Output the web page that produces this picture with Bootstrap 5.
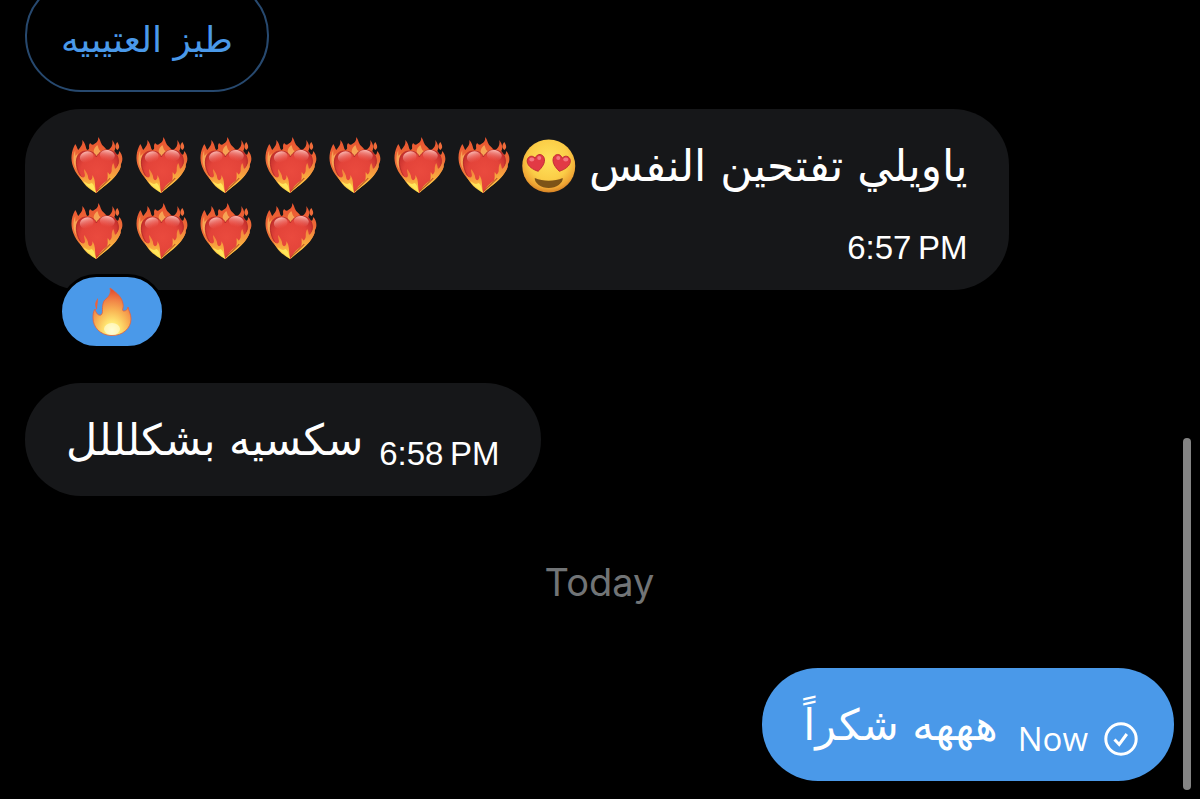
<!DOCTYPE html>
<html lang="ar" dir="ltr" data-bs-theme="dark">
<head>
<meta charset="utf-8">
<meta name="viewport" content="width=device-width, initial-scale=1">
<title>Messages</title>
<link href="https://cdn.jsdelivr.net/npm/bootstrap@5.3.0/dist/css/bootstrap.min.css" rel="stylesheet">
<style>
  body { background: #000; color: #fff; }
  .chat { padding: 0 26px 18px 25px; }
  .bubble { background: #161719; border-radius: 56px; padding: 24px 41px 23px; }
  .bubble-sent { background: #4a99e9; padding-right: 36px; }
  .bubble-outline { background: #000; border: 2px solid #27496f; color: #4a99e9; padding: 26px 34px 17px; margin-bottom: 17px; }
  .bubble-wide { padding-left: 40px; margin-bottom: 93px; }
  .msg { font-family: "DejaVu Sans", sans-serif; font-size: 43px; line-height: 66px; white-space: nowrap; }
  .msg-small { font-size: 36px; }
  .msg-wide { font-size: 44px; }
  .stamp { font-family: "Liberation Sans", sans-serif; font-size: 33px; line-height: 38px; white-space: nowrap; }
  .stamp-now { font-family: "Open Sans", "Noto Sans", sans-serif; }
  .day { font-family: Inter, sans-serif; font-size: 38px; line-height: 172px; color: #717476; }
  .emoji-grid { display: grid; grid-template-columns: repeat(8, 1fr); width: 516px; margin-bottom: 2px; }
  .emoji-grid svg { width: 100%; height: 66px; display: block; }
  .reaction { left: 34px; bottom: -59px; width: 106px; height: 75px; border: 3px solid #000; border-radius: 38px; background: #4a99e9; }
  .thumb { right: 9px; bottom: 9px; width: 8px; height: 44vh; border-radius: 4px; background: #848484; }
</style>
</head>
<body>
<svg width="0" height="0" class="position-absolute" aria-hidden="true">
  <defs>
    <linearGradient id="flameL" x1="0" y1="0" x2="0" y2="1"><stop offset="0" stop-color="#e9532f"/><stop offset=".45" stop-color="#ee6c38"/><stop offset="1" stop-color="#f08a38"/></linearGradient>
    <linearGradient id="lick" x1="0" y1="0" x2="0" y2="1"><stop offset="0" stop-color="#f07a3c"/><stop offset=".5" stop-color="#f8a83e"/><stop offset="1" stop-color="#ffe64a"/></linearGradient>
    <radialGradient id="heartG" cx=".5" cy=".5" r=".6"><stop offset="0" stop-color="#ea4a3e"/><stop offset=".65" stop-color="#e34339"/><stop offset="1" stop-color="#c22e2c"/></radialGradient>
    <linearGradient id="shine" x1="0" y1="0" x2="0" y2="1"><stop offset="0" stop-color="#ffc0b8" stop-opacity=".95"/><stop offset="1" stop-color="#f06058" stop-opacity="0"/></linearGradient>
    <radialGradient id="faceG" cx=".5" cy=".38" r=".63"><stop offset="0" stop-color="#ffe35c"/><stop offset=".6" stop-color="#fbcd47"/><stop offset=".86" stop-color="#efa534"/><stop offset="1" stop-color="#d17c22"/></radialGradient>
    <radialGradient id="fireG" cx=".5" cy=".9" r=".85"><stop offset="0" stop-color="#fffbd0"/><stop offset=".22" stop-color="#ffe873"/><stop offset=".5" stop-color="#f9b655"/><stop offset=".78" stop-color="#f07f45"/><stop offset="1" stop-color="#e4502f"/></radialGradient>
    <path id="smallHeart" d="M0 9C-5 6-9 2-8.700-2.500C-8.500-7-3-9.500 0-4.500C3-9.500 8.500-7 8.700-2.500C9 2 5 6 0 9Z"/>
  </defs>
  <symbol id="heart" viewBox="0 0 64 66">
    <path fill="url(#flameL)" d="M31 60C22 52 12 45 8 34C5 26 6 18 10 11C12 14 12 16 13 17C15 14 18 12 17 7C21 11 20 15 22 17C26 16 22 13 25 10C26 12 28 12 29 11C32 9 33 8 33 4C36 8 35 11 39 14C41 16 42 18 43 17C46 15 48 12 47 7C50 11 51 15 49 18C52 22 53 24 54 18C58 22 58 29 55 32C57 34 52 40 50 43C44 49 37 55 31 60Z"/>
    <path fill="#f06c3a" d="M52 9C50 12 49 14 52 17C55 15 54 12 52 9Z"/>
    <path fill="#f9b45c" opacity=".8" d="M10 17C7 24 8 32 11 36C10 29 11 24 13 20L10 23ZM32 12C28 16 27 19 31 24C36 21 37 19 34 17C33 15 33 14 32 12Z"/>
    <path fill="url(#heartG)" stroke="#b92d2a" stroke-width="1" d="M31 60C26 52 14 46 12 35C9 25 14 18 21 18C26 18 30 20 31 24C34 19 38 16.500 43 17C52 18 55 26 52 34C49 44 38 48 31 60Z"/>
    <ellipse cx="21.500" cy="24" rx="7" ry="5.500" fill="url(#shine)" transform="rotate(-18 21.500 24)"/>
    <ellipse cx="42" cy="22.500" rx="7.500" ry="5.500" fill="url(#shine)" transform="rotate(10 42 22.500)"/>
    <path fill="url(#lick)" d="M31 60C24 56 17 51 14 42C16 44 18 45 19 44C21 42 18 39 19 36C21 39 23 42 23 45C24 49 28 47 27 42C31 47 29 54 31 60Z"/>
    <path fill="url(#lick)" d="M31 60C34 53 39 50 42 47C43 43 42 42 42.500 39C44 41 44 42 45 41C48 38 45 35 48 30C50 34 49 37 51 35C53 32 54 30 55 28C57 33 54 38 51 42C46 49 37 54 31 60Z"/>
    <path fill="#ffe65a" d="M30.500 59C25 55 20 52 18 48C22 51 24 52 26 50C29 51 29 55 30.500 59Z"/>
    <path fill="none" stroke="#a92c1e" stroke-width="1.200" opacity=".7" d="M32 58C36 53 41 50 45 45"/>
  </symbol>
  <symbol id="loveface" viewBox="0 0 64 66">
    <circle cx="31.500" cy="33" r="26.500" fill="url(#faceG)"/>
    <g fill="#e23a45" stroke="#b92432" stroke-width=".8"><use href="#smallHeart" transform="translate(19 29.500) rotate(-12)"/><use href="#smallHeart" transform="translate(44 29.500) rotate(12)"/></g>
    <g fill="#fa8b93" opacity=".75"><ellipse cx="14.500" cy="26.500" rx="2.500" ry="2"/><ellipse cx="22" cy="25" rx="2" ry="2"/><ellipse cx="41" cy="25" rx="2" ry="2"/><ellipse cx="48.500" cy="26.500" rx="2.500" ry="2"/></g>
    <path fill="#7d5317" d="M17.500 45C26 48.500 37 48.500 45.500 45C46 50 39 55 31.500 55C24 55 17 50 17.500 45Z"/>
  </symbol>
  <symbol id="fire" viewBox="0 0 40 50">
    <path fill="#ed6238" d="M6 11C3 15 2 18 5 23C5 18 6 16 6 11Z"/>
    <path fill="url(#fireG)" stroke="#e8603a" stroke-width=".8" d="M19 48.500C8 48 1 40 1 31C1 28 1 25 3 22C4 26 6 29 9 28C12 26 9 20 12 14C14 11 20 9 18 1C25 6 30 10 31 17C32 21 29 24 32 24C34 24 36 22 36 20C37 25 39 27 39 32C39 41 31 49 19 48.500Z"/>
    <ellipse cx="20" cy="42" rx="8" ry="6" fill="#fffdd8" opacity=".65"/>
  </symbol>
</svg>

<main class="chat d-flex flex-column justify-content-end align-items-start vh-100 overflow-hidden position-relative">
  <div class="bubble bubble-outline flex-shrink-0"><div class="msg msg-small" dir="rtl">طيز العتيبيه</div></div>

  <div class="bubble bubble-wide flex-shrink-0 position-relative d-flex">
    <div class="emoji-grid flex-shrink-0" role="img">
      <svg><use href="#heart"/></svg><svg><use href="#heart"/></svg><svg><use href="#heart"/></svg><svg><use href="#heart"/></svg>
      <svg><use href="#heart"/></svg><svg><use href="#heart"/></svg><svg><use href="#heart"/></svg><svg><use href="#loveface"/></svg>
      <svg><use href="#heart"/></svg><svg><use href="#heart"/></svg><svg><use href="#heart"/></svg><svg><use href="#heart"/></svg>
    </div>
    <div class="d-flex flex-column justify-content-between align-items-end ps-2">
      <div class="msg msg-wide" dir="rtl">ياويلي تفتحين النفس</div>
      <time class="stamp">6:57&#8201;PM</time>
    </div>
    <button type="button" class="reaction position-absolute p-0 d-flex align-items-center justify-content-center" aria-label="fire"><svg width="40" height="50"><use href="#fire"/></svg></button>
  </div>

  <div class="bubble flex-shrink-0 d-flex align-items-end">
    <div class="msg" dir="rtl">سكسيه بشكلللل</div>
    <time class="stamp ms-3">6:58&#8201;PM</time>
  </div>

  <div class="day align-self-center flex-shrink-0">Today</div>

  <div class="bubble bubble-sent flex-shrink-0 align-self-end d-flex align-items-end">
    <div class="msg" dir="rtl">هههه شكراً</div>
    <time class="stamp stamp-now ms-3 ps-1">Now</time>
    <svg class="ms-3" width="34" height="36" viewBox="0 0 34 36" fill="none" stroke="#fff" stroke-width="3"><circle cx="17" cy="17" r="15.200"/><path d="M10.500 17.500l4.700 5 7.600-10.500"/></svg>
  </div>
</main>
<div class="thumb position-fixed"></div>
</body>
</html>
